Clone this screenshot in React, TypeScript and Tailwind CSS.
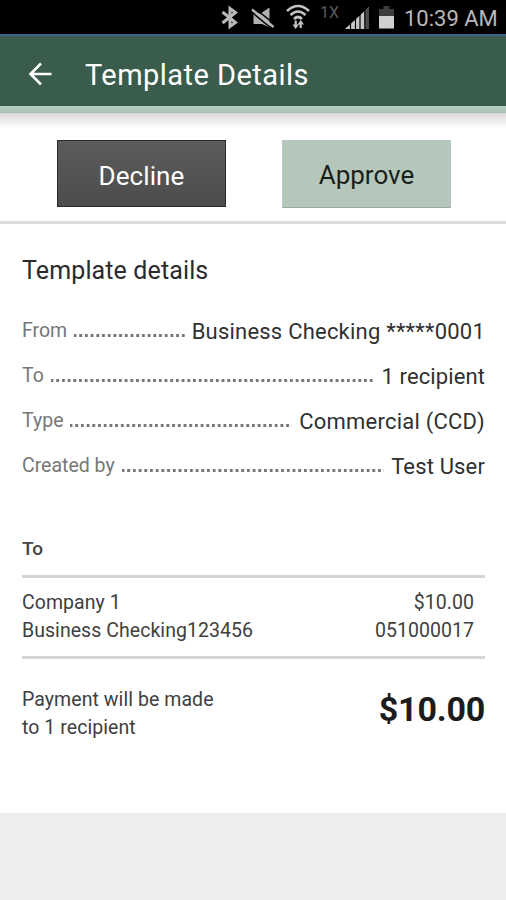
import clsx from 'clsx';

interface DetailRowProps {
  label: string;
  value: string;
  labelClass?: string;
  valueClass?: string;
}

const DetailRow: React.FC<DetailRowProps> = ({
  label,
  value,
  labelClass = '',
  valueClass = '',
}) => (
  <div className="flex h-[45px]">
    <div
      className={clsx(
        'text-[19.5px] leading-[25px] text-[#777] whitespace-nowrap',
        labelClass
      )}
    >
      {label}
    </div>
    {/* Dotted leader */}
    <div className="flex-1 mx-[7px] mt-[16px] h-[2.5px] bg-[repeating-linear-gradient(90deg,#777_0px,#777_1.8px,transparent_3px,transparent_4.8px,#777_5.7px)]" />
    <div
      className={clsx(
        'text-[22px] leading-[28px] text-[#303030] whitespace-nowrap',
        valueClass
      )}
    >
      {value}
    </div>
  </div>
);

const StatusBar = () => (
  <div className="h-[34px] shrink-0 bg-black flex items-center pl-[220px] text-[#b8b8b8]">
    <svg width="184" height="34" viewBox="220 0 184 34" fill="none" className="shrink-0">
      {/* Bluetooth */}
      <path
        d="M222.5 12L235.5 22.500L230 26.500V8.500L235.500 12.500L222.500 23"
        stroke="#b8b8b8"
        strokeWidth="3"
      />
      {/* Muted speaker */}
      <path d="M253.500 13.500H260.500L269.500 7.500V27.500L262 24H253.500Z" fill="#b0b0b0" />
      <path d="M254.500 8L275.500 25" stroke="#000" strokeWidth="1.6" />
      <path d="M250.500 11L271.500 28.500" stroke="#000" strokeWidth="1.6" />
      <path d="M252 9.500L273.500 27" stroke="#b8b8b8" strokeWidth="2.4" />
      {/* Wifi */}
      <g stroke="#c4c4c4" strokeWidth="2.6">
        <path d="M287 11Q298 1 309 11" />
        <path d="M290.500 15Q298 8 305.500 15" />
        <path d="M294 19Q298 15 302 19" />
      </g>
      <path d="M295.700 20.500V26M300.700 28V23" stroke="#c4c4c4" strokeWidth="2.2" />
      <path d="M292.500 24.500H299L295.700 29ZM297.500 24.500H304L300.700 20Z" fill="#c4c4c4" />
      <text x="320" y="18" fontSize="16" fill="#5a5a5a">1X</text>
      {/* Signal */}
      <path d="M345 29L369 7V29Z" fill="#c8c8c8" />
      <path d="M365 29V10.700L369 7V29Z" fill="#4a4a4a" />
      <path
        d="M350.500 29V22M355.500 29V18M360 29V13M364.800 29V9"
        stroke="#000"
        strokeWidth="1.2"
      />
      {/* Battery */}
      <path d="M379 16V9H383.500V6H389.500V9H394V16Z" fill="#3c3c3c" />
      <path d="M379 16H394V28.500H379Z" fill="#d0d0d0" />
    </svg>
    <span className="text-[22px] leading-[34px] pt-[3px] whitespace-nowrap">10:39 AM</span>
  </div>
);

export default function App() {
  return (
    <div className="w-[506px] h-[900px] flex flex-col overflow-hidden bg-white font-['Roboto',sans-serif]">
      <StatusBar />

      {/* App bar */}
      <header className="h-[72px] shrink-0 border-t-2 border-[#3f628e] bg-[#3a5c4d] flex items-center pl-[28px] text-white">
        <svg
          width="24"
          height="24"
          viewBox="0 0 24 24"
          fill="none"
          stroke="white"
          strokeWidth="2.6"
          className="mt-[5px]"
        >
          <path d="M23.500 12H2.500M13 1.500L2.500 12L13 22.500" />
        </svg>
        <h1 className="ml-[33px] mt-[7px] text-[29px] leading-[36px] tracking-[0.46px]">
          <span>Template Details</span>
        </h1>
      </header>
      <div className="h-[7px] shrink-0 bg-linear-to-b from-[#b6ccbf] to-[#a8c2b3]" />

      {/* Actions */}
      <div className="h-[111px] shrink-0 flex pt-[27px] pl-[57px] gap-[56px] border-b-[3px] border-[#dcdcdc] bg-linear-to-b from-[#dcd8d8] to-white to-[15px]">
        <button className="w-[169px] h-[67px] pt-[5px] border border-[#2b2b2b] bg-linear-to-b from-[#5c5c5c] to-[#4c4c4c] text-[26px] tracking-[0.1px] text-white">
          <span>Decline</span>
        </button>
        <button className="w-[169px] h-[68px] pt-[3px] border border-[#b5c7c9] border-b-[#9fa9a4] bg-[#b5c7ba] text-[26px] text-[#1a1f1c]">
          <span>Approve</span>
        </button>
      </div>

      {/* Details */}
      <main className="h-[589px] shrink-0 px-[22px] pr-[21px] flex flex-col">
        <h2 className="mt-[30px] text-[25px] leading-[34px] tracking-[0.12px] text-[#2b2b2b]">
          <span>Template details</span>
        </h2>
        <div className="mt-[30px]">
          <DetailRow label="From" value="Business Checking *****0001" valueClass="tracking-[0.22px]" />
          <DetailRow label="To" value="1 recipient" valueClass="tracking-[0.1px]" />
          <DetailRow label="Type" value="Commercial (CCD)" valueClass="tracking-[0.22px]" />
          <DetailRow label="Created by" value="Test User" valueClass="tracking-[0.15px]" />
        </div>
        <h3 className="mt-[39px] text-[19px] leading-[24px] font-medium text-[#444]">
          <span>To</span>
        </h3>
        <div className="mt-[14px] h-[84px] border-y-[3px] border-[#d5d5d5] pt-[11px] pr-[11px] flex justify-between text-[19.500px] leading-[28px] tracking-[0.05px] text-[#404040]">
          <div>
            <div><span>Company 1</span></div>
            <div><span>Business Checking123456</span></div>
          </div>
          <div className="text-right">
            <div><span>$10.00</span></div>
            <div><span>051000017</span></div>
          </div>
        </div>
        <div className="mt-[27px] flex justify-between text-[19.500px] leading-[28px] tracking-[0.07px] text-[#404040]">
          <div>
            <div><span>Payment will be made</span></div>
            <div><span>to 1 recipient</span></div>
          </div>
          <div className="mt-[3px] text-[34px] leading-[40px] tracking-[-0.2px] font-bold text-[#1c1c1c]">
            <span>$10.00</span>
          </div>
        </div>
      </main>
      <div className="flex-1 bg-[#ededed]" />
    </div>
  );
}
